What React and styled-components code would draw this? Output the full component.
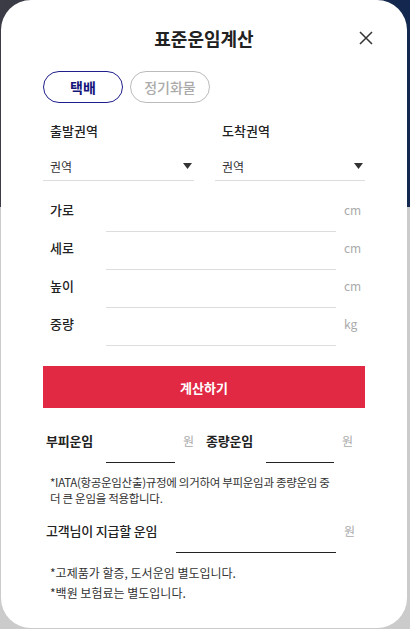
import React from 'react';
import styled, { createGlobalStyle } from 'styled-components';

const GlobalStyle = createGlobalStyle`
  html, body {
    margin: 0;
    padding: 0;
  }
  body {
    width: 410px;
    height: 629px;
    overflow: hidden;
    font-family: "Noto Sans CJK KR", "Noto Sans", sans-serif;
    color: #222;
    background:
      linear-gradient(to right, #3b3c45, #2a3350 50%, #13284f) top left / 100% 207px no-repeat,
      #cbcbcb;
  }
`;

const CloseIcon = () => (
  <svg width="14" height="14" viewBox="0 0 14 14" fill="none">
    <path d="M1 1L13 13M13 1L1 13" stroke="#333" strokeWidth="1.5" />
  </svg>
);

const Arrow = () => (
  <svg width="9" height="6" viewBox="0 0 9 6">
    <path d="M0 0H9L4.5 6Z" fill="#333" />
  </svg>
);

const FreightCalculator = () => {
  const sizes = [
    { label: '가로', unit: 'cm' },
    { label: '세로', unit: 'cm' },
    { label: '높이', unit: 'cm' },
    { label: '중량', unit: 'kg' },
  ];

  return (
    <Modal>
      <Header>
        <Title>표준운임계산</Title>
        <CloseButton aria-label="닫기">
          <CloseIcon />
        </CloseButton>
      </Header>

      <Tabs>
        <Tab $active>택배</Tab>
        <Tab>정기화물</Tab>
      </Tabs>

      <RegionGrid>
        <Region>
          <RegionLabel>출발권역</RegionLabel>
          <Select>
            <span>권역</span>
            <Arrow />
          </Select>
        </Region>
        <Region>
          <RegionLabel>도착권역</RegionLabel>
          <Select>
            <span>권역</span>
            <Arrow />
          </Select>
        </Region>
      </RegionGrid>

      <SizeList>
        {sizes.map((s) => (
          <SizeRow key={s.label}>
            <FieldLabel>{s.label}</FieldLabel>
            <Input />
            <Unit>{s.unit}</Unit>
          </SizeRow>
        ))}
      </SizeList>

      <CalcButton>계산하기</CalcButton>

      <ResultRow>
        <ResultItem>
          <ResultLabel $width={63}>부피운임</ResultLabel>
          <ResultLine $width={69} />
          <Unit>원</Unit>
        </ResultItem>
        <ResultItem>
          <ResultLabel $width={63}>종량운임</ResultLabel>
          <ResultLine $width={68} />
          <Unit>원</Unit>
        </ResultItem>
      </ResultRow>

      <Note>*IATA(항공운임산출)규정에 의거하여 부피운임과 종량운임 중 더 큰 운임을 적용합니다.</Note>

      <PayRow>
        <ResultLabel $width={133} $light>고객님이 지급할 운임</ResultLabel>
        <ResultLine $width={160} />
        <Unit>원</Unit>
      </PayRow>

      <Notes>
        <li>*고제품가 할증, 도서운임 별도입니다.</li>
        <li>*백원 보험료는 별도입니다.</li>
      </Notes>
    </Modal>
  );
};

const App = () => (
  <>
    <GlobalStyle />
    <FreightCalculator />
  </>
);

export default App;

const Modal = styled.div`
  box-sizing: border-box;
  margin-left: 1px;
  width: 406px;
  height: 628px;
  background: #fff;
  border-radius: 30px;
  padding: 24px 42px 0;
`;

const Header = styled.div`
  position: relative;
  display: flex;
  justify-content: center;
`;

const Title = styled.h2`
  margin: 0;
  font-size: 18px;
  line-height: 28px;
  font-weight: 700;
  color: #222;
`;

const CloseButton = styled.button`
  position: absolute;
  right: -8px;
  top: 7px;
  padding: 0;
  border: 0;
  background: none;
  display: flex;
`;

const Tabs = styled.div`
  display: flex;
  gap: 7px;
  margin-top: 19px;
`;

const Tab = styled.button`
  box-sizing: border-box;
  width: 80px;
  height: 32px;
  border-radius: 16px;
  background: #fff;
  font-family: inherit;
  font-size: 14px;
  padding: 0;
  border: 1px solid ${({ $active }) => ($active ? '#1e1e8c' : '#bbb')};
  color: ${({ $active }) => ($active ? '#14147a' : '#aaa')};
  font-weight: ${({ $active }) => ($active ? 700 : 500)};
`;

const RegionGrid = styled.div`
  display: grid;
  grid-template-columns: 151px 150px;
  column-gap: 21px;
  margin-top: 18px;
`;

const Region = styled.div`
  display: flex;
  flex-direction: column;
`;

const RegionLabel = styled.div`
  padding-left: 7px;
  font-size: 13px;
  line-height: 20px;
  font-weight: 500;
  color: #222;
`;

const Select = styled.div`
  margin-top: 11px;
  height: 28px;
  display: flex;
  align-items: center;
  justify-content: space-between;
  padding: 0 2px 0 7px;
  border-bottom: 1px solid #ddd;
  font-size: 12px;
  color: #333;
`;

const SizeList = styled.div`
  margin-top: 17px;
  display: flex;
  flex-direction: column;
  gap: 4px;
`;

const SizeRow = styled.div`
  display: flex;
  align-items: flex-start;
`;

const FieldLabel = styled.div`
  width: 63px;
  padding-left: 7px;
  box-sizing: border-box;
  font-size: 13px;
  line-height: 24px;
  font-weight: 500;
  color: #222;
`;

const Input = styled.div`
  width: 230px;
  height: 33px;
  border-bottom: 1px solid #ddd;
`;

const Unit = styled.span`
  margin-left: 8px;
  font-size: 12px;
  line-height: 24px;
  color: #aaa;
`;

const CalcButton = styled.button`
  display: block;
  width: 100%;
  height: 42px;
  margin-top: 20px;
  border: 0;
  padding: 0;
  background: #e12944;
  color: #fff;
  font-family: inherit;
  font-size: 13px;
  font-weight: 700;
`;

const ResultRow = styled.div`
  display: flex;
  gap: 9px;
  margin-top: 21px;
`;

const ResultItem = styled.div`
  display: flex;
  align-items: flex-start;
`;

const ResultLabel = styled.div`
  box-sizing: border-box;
  width: ${({ $width }) => $width}px;
  padding-left: 3px;
  font-size: 13px;
  line-height: 24px;
  font-weight: ${({ $light }) => ($light ? 500 : 700)};
  color: #222;
  white-space: nowrap;
  letter-spacing: -0.2px;
`;

const ResultLine = styled.div`
  width: ${({ $width }) => $width}px;
  height: 33px;
  border-bottom: 1px solid #222;
`;

const Note = styled.p`
  margin: 11px 0 0;
  padding: 0 27px 0 7px;
  font-size: 11.5px;
  line-height: 16px;
  letter-spacing: -0.3px;
  word-break: keep-all;
  color: #333;
`;

const PayRow = styled.div`
  display: flex;
  align-items: flex-start;
  margin-top: 13px;
`;

const Notes = styled.ul`
  list-style: none;
  margin: 10px 0 0;
  padding: 0 7px;
  font-size: 12px;
  line-height: 20px;
  color: #333;
`;
